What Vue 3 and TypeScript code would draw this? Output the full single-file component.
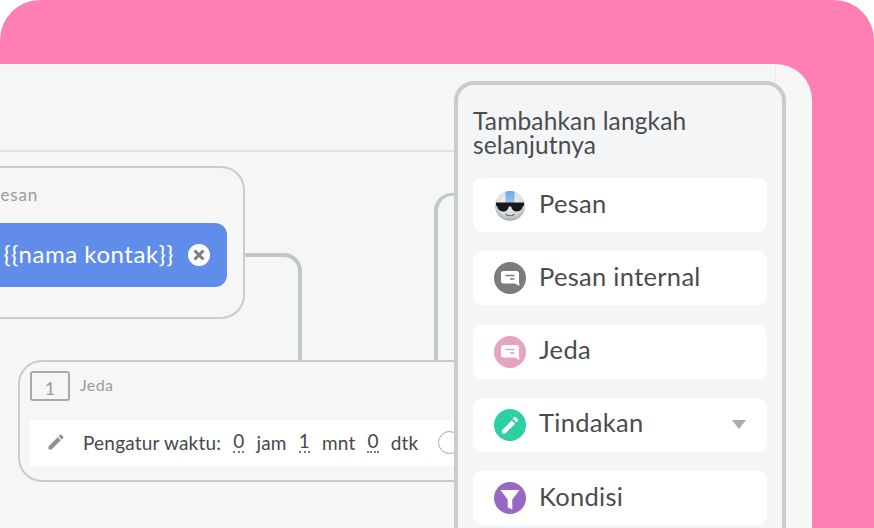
<script setup lang="ts">
interface Step {
  label: string;
  icon: string;
  arrow?: boolean;
}

const contactTag = '{' + '{nama kontak}' + '}'

const steps: Step[] = [
  { label: 'Pesan', icon: 'bot' },
  { label: 'Pesan internal', icon: 'note' },
  { label: 'Jeda', icon: 'delay' },
  { label: 'Tindakan', icon: 'action', arrow: true },
  { label: 'Kondisi', icon: 'filter' },
]
</script>

<template>
  <main class="stage">
    <section class="canvas">
      <div class="canvas__rule"></div>
      <div class="canvas__edge"></div>

      <div class="link link--first"></div>
      <div class="link link--second"></div>

      <div class="node node--message">
        <span class="node__name node__name--message">Pesan</span>
        <div class="chip">
          <span class="chip__text">{{ contactTag }}</span>
          <svg class="chip__close" viewBox="0 0 22 22">
            <circle cx="11" cy="11" r="11" fill="#fff" />
            <path d="M6.500 6.500l9 9M15.500 6.500l-9 9" stroke="#7d7f82" stroke-width="3" fill="none" />
          </svg>
        </div>
      </div>

      <div class="node node--delay">
        <div class="node__head">
          <span class="node__num">1</span>
          <span class="node__name">Jeda</span>
        </div>
        <div class="timer">
          <svg class="timer__pen" viewBox="0 0 24 24">
            <path fill="#8f9193" d="M3 17.25V21h3.75L17.8 9.94l-3.75-3.75L3 17.25zM20.7 7.04a1 1 0 0 0 0-1.41l-2.34-2.34a1 1 0 0 0-1.41 0l-1.83 1.83 3.75 3.75 1.83-1.83z" />
          </svg>
          <span class="timer__label">Pengatur waktu:</span>
          <span class="timer__val">0</span><span>jam</span>
          <span class="timer__val">1</span><span>mnt</span>
          <span class="timer__val">0</span><span>dtk</span>
          <span class="timer__dot"></span>
        </div>
      </div>

      <aside class="panel">
        <h2 class="panel__title">Tambahkan langkah selanjutnya</h2>
        <ul class="panel__list">
          <li v-for="step in steps" :key="step.label" class="step">
            <svg v-if="step.icon === 'bot'" class="step__icon" viewBox="0 0 32 32">
              <defs>
                <radialGradient id="botFace" cx="50%" cy="35%" r="65%">
                  <stop offset="0" stop-color="#f6f7f8" />
                  <stop offset="0.7" stop-color="#d8dbde" />
                  <stop offset="1" stop-color="#9ea5ab" />
                </radialGradient>
                <linearGradient id="botStripe" x1="0" y1="0" x2="0" y2="1">
                  <stop offset="0" stop-color="#6ea4ea" />
                  <stop offset="1" stop-color="#9cc4f0" />
                </linearGradient>
              </defs>
              <circle cx="16" cy="17" r="15" fill="url(#botFace)" />
              <path d="M11.500 2.800C13 1.800 19 1.800 20.500 2.800V14h-9z" fill="url(#botStripe)" />
              <path d="M2 13.500h28v2.500c0 .6-.4 1-1 1-.8 3.400-2.600 5.500-6 5.500-3.600 0-5.300-2.100-5.800-5h-2.400c-.5 2.900-2.200 5-5.800 5-3.400 0-5.200-2.100-6-5.500-.6 0-1-.4-1-1z" fill="#17181a" />
              <path d="M11.500 25c2.500 2.300 6.500 2.300 9 0" stroke="#6c7176" stroke-width="1.2" fill="none" />
            </svg>
            <span v-else class="step__icon" :class="`step__icon--${step.icon}`">
              <svg v-if="step.icon === 'note' || step.icon === 'delay'" viewBox="0 0 32 32">
                <path fill="#fff" d="M9.500 9h13a2.500 2.500 0 0 1 2.500 2.500v8.500l.5 4-4.500-2.500H9.500A2.500 2.500 0 0 1 7 19v-7.500A2.500 2.500 0 0 1 9.500 9z" />
                <path d="M11.500 13.500h9M16 17h4.500" stroke="currentColor" stroke-width="1.3" fill="none" />
              </svg>
              <svg v-else-if="step.icon === 'action'" viewBox="0 0 32 32">
                <path fill="#fff" d="M8 21.200V24.500h3.300l9.800-9.800-3.300-3.300zM22.400 13.400l1.600-1.600a1 1 0 0 0 0-1.400l-2.400-2.400a1 1 0 0 0-1.400 0l-1.600 1.600z" />
              </svg>
              <svg v-else viewBox="0 0 32 32">
                <path fill="#fff" d="M6.500 8h19L18.300 17.500v10l-4.600-2.200v-7.800z" />
              </svg>
            </span>
            <span class="step__label">{{ step.label }}</span>
            <span v-if="step.arrow" class="step__arrow"></span>
          </li>
        </ul>
      </aside>
    </section>
  </main>
</template>

<style>
html, body {
  margin: 0;
  background: #fff;
  overflow: hidden;
}
</style>

<style scoped>
.stage {
  box-sizing: border-box;
  width: 874px;
  height: 528px;
  padding: 64px 62px 0 0;
  background: #ff7eb3;
  border-radius: 40px 40px 0 0;
  overflow: hidden;
  font-family: Lato, "Noto Sans", sans-serif;
  color: #4a4c4f;
}

.canvas {
  position: relative;
  display: flex;
  justify-content: flex-end;
  box-sizing: border-box;
  height: 100%;
  padding: 17px 26px 0 0;
  background: #f6f6f6;
  border-radius: 0 36px 0 0;
  overflow: hidden;
}

.canvas__rule {
  position: absolute;
  left: 0;
  top: 86px;
  width: 460px;
  height: 2px;
  background: #e1e3e3;
}

.canvas__edge {
  position: absolute;
  left: 775px;
  top: 0;
  width: 1px;
  height: 18px;
  background: #eceded;
}

.link {
  position: absolute;
  box-sizing: border-box;
  border: 0 solid #bcc9c5;
}

.link--first {
  left: 243px;
  top: 189px;
  width: 59px;
  height: 110px;
  border-width: 4px 4px 0 0;
  border-top-right-radius: 18px;
}

.link--second {
  left: 434px;
  top: 129px;
  width: 30px;
  height: 170px;
  border-width: 3px 0 0 4px;
  border-top-left-radius: 18px;
}

.node {
  position: absolute;
  box-sizing: border-box;
  border: 2px solid #c9cccb;
  border-radius: 24px;
  background: #f6f6f6;
}

.node--message {
  left: -60px;
  top: 102px;
  width: 305px;
  height: 153px;
}

.node--delay {
  left: 18px;
  top: 296px;
  width: 500px;
  height: 122px;
  padding: 9px 10px;
}

.node__head {
  display: flex;
  align-items: flex-start;
  gap: 10px;
  height: 49px;
}

.node__num {
  display: flex;
  align-items: center;
  justify-content: center;
  box-sizing: border-box;
  width: 40px;
  height: 30px;
  padding-top: 3px;
  border: 2px solid #a9abab;
  border-radius: 3px;
  font-size: 18px;
  color: #9a9c9e;
}

.node__name {
  font-size: 16px;
  line-height: 28px;
  letter-spacing: 0.4px;
  color: #9a9c9e;
}

.node__name--message {
  position: absolute;
  left: 48px;
  top: 13px;
  font-size: 17px;
  letter-spacing: 0.8px;
}

.chip {
  position: absolute;
  right: 16px;
  top: 55px;
  display: flex;
  align-items: center;
  box-sizing: border-box;
  width: 280px;
  height: 64px;
  padding-right: 17px;
  justify-content: flex-end;
  gap: 14px;
  background: #608de9;
  border-radius: 12px;
  color: #fff;
}

.chip__text {
  padding-bottom: 4px;
  font-size: 24px;
  letter-spacing: 0.55px;
}

.chip__close {
  width: 22px;
  height: 22px;
}

.timer {
  display: flex;
  align-items: center;
  gap: 12px;
  height: 46px;
  padding: 0 0 2px 16px;
  box-sizing: border-box;
  background: #fff;
  font-size: 19px;
  letter-spacing: 0.2px;
  color: #46484b;
}

.timer__pen {
  width: 20px;
  height: 20px;
  margin-right: 5px;
}

.timer__val {
  border-bottom: 2px dotted #77797b;
  line-height: 20px;
}

.timer__dot {
  box-sizing: border-box;
  width: 23px;
  height: 23px;
  margin-left: 8px;
  border: 1px solid #a5a7a8;
  border-radius: 50%;
}

.panel {
  position: relative;
  box-sizing: border-box;
  width: 332px;
  height: 480px;
  padding: 24px 15px 0;
  background: #f4f5f7;
  border: 4px solid #c9cccc;
  border-radius: 20px 20px 0 0;
}

.panel__title {
  margin: 0;
  font-size: 24.5px;
  line-height: 24px;
  font-weight: 400;
  letter-spacing: 0.15px;
  color: #4a4c4f;
}

.panel__list {
  display: flex;
  flex-direction: column;
  gap: 19.3px;
  margin: 21px 0 0;
  padding: 0;
  list-style: none;
}

.step {
  display: flex;
  align-items: center;
  gap: 13px;
  height: 54px;
  padding: 0 21px;
  background: #fff;
  border-radius: 9px;
  font-size: 25.5px;
  letter-spacing: 0.3px;
}

.step__label {
  padding-bottom: 5px;
}

.step__icon {
  display: block;
  flex: none;
  width: 32px;
  height: 32px;
  border-radius: 50%;
}

.step__icon svg {
  display: block;
}

.step__icon--note {
  background: #7c7c7c;
  color: #7c7c7c;
}

.step__icon--delay {
  background: #e6a3c2;
  color: #e6a3c2;
}

.step__icon--action {
  background: #2cd0a2;
}

.step__icon--filter {
  background: #9868c6;
}

.step__arrow {
  width: 0;
  height: 0;
  margin-left: auto;
  border-style: solid;
  border-width: 9px 7px 0;
  border-color: #a9abad transparent transparent;
}
</style>
